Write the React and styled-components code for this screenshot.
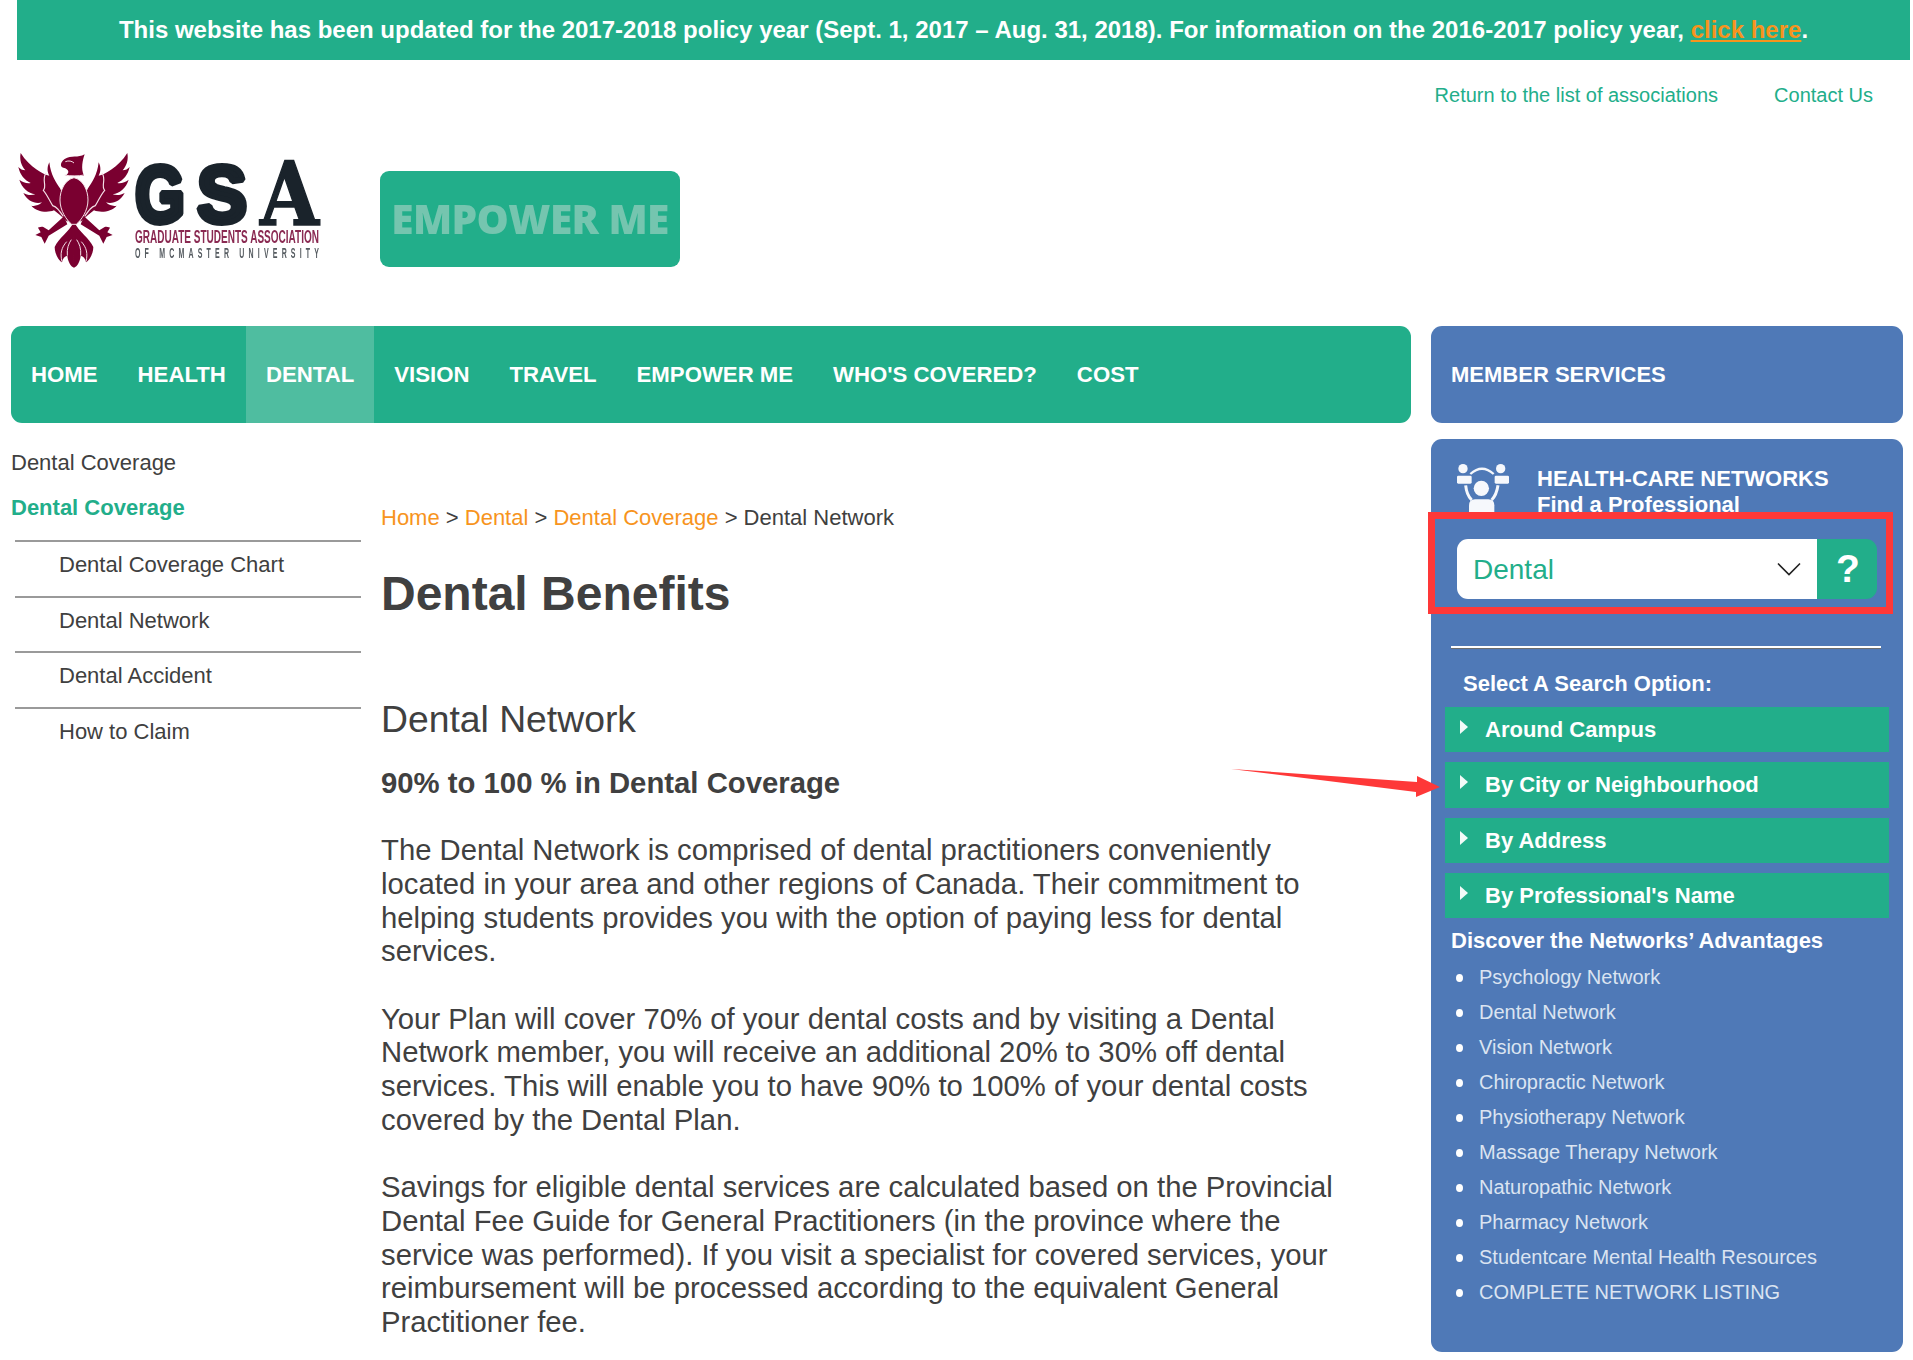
import React from "react";
import styled, { createGlobalStyle } from "styled-components";

const Global = createGlobalStyle`
  html, body { margin: 0; padding: 0; background: #fff; }
  body { font-family: "Liberation Sans", Arial, sans-serif; color: #404040; }
  * { box-sizing: border-box; }
  a { text-decoration: none; color: inherit; }
`;

const GREEN = "#22ae8a";
const BLUE = "#4f79b7";
const ORANGE = "#f7941d";

const Page = styled.div`
  position: relative;
  width: 1913px;
  height: 1360px;
  overflow: hidden;
`;
const Banner = styled.div`
  margin-left: 17px;
  width: 1893px;
  height: 60px;
  background: ${GREEN};
  color: #fff;
  font-weight: 700;
  font-size: 24px;
  line-height: 60px;
  text-align: center;
  white-space: nowrap;
  a { color: ${ORANGE}; text-decoration: underline; }
`;
const TopLinks = styled.div`
  display: flex;
  justify-content: flex-end;
  gap: 56px;
  height: 93px;
  padding: 24px 40px 0 0;
  font-size: 20px;
  line-height: 23px;
  color: ${GREEN};
`;
const Header = styled.div`
  display: flex;
  height: 173px;
  padding-left: 18px;
`;
const LogoBox = styled.div`
  width: 362px;
  flex: none;
  svg { display: block; overflow: visible; filter: blur(0.6px); }
`;
const EmpowerBtn = styled.div`
  margin-top: 18px;
  width: 300px;
  height: 96px;
  border-radius: 9px;
  background: ${GREEN};
  color: #75c5af;
  font-family: "Open Sans", "Liberation Sans", sans-serif;
  font-weight: 800;
  font-size: 40.6px;
  line-height: 96px;
  text-align: center;
  letter-spacing: -0.6px;
  white-space: nowrap;
  filter: blur(0.7px);
`;
const NavRow = styled.div`
  display: flex;
  gap: 20px;
  padding-left: 11px;
`;
const MainNav = styled.nav`
  display: flex;
  width: 1400px;
  height: 97px;
  border-radius: 11px;
  background: ${GREEN};
  overflow: hidden;
`;
const NavItem = styled.a`
  padding: 0 20px;
  font-size: 22.2px;
  font-weight: 700;
  line-height: 97px;
  color: #fff;
  background: ${p => (p.$active ? "#4fbda0" : "transparent")};
`;
const MemberBar = styled.div`
  width: 472px;
  height: 97px;
  padding-left: 20px;
  border-radius: 11px;
  background: ${BLUE};
  font-size: 22px;
  font-weight: 700;
  line-height: 97px;
  color: #fff;
`;
const Columns = styled.div`
  display: flex;
  padding-left: 11px;
`;
const SideNav = styled.aside`
  width: 350px;
  flex: none;
  padding-top: 27px;
  font-size: 22px;
`;
const SideTitle = styled.div`
  line-height: 26px;
`;
const SideCurrent = styled.div`
  margin-top: 19px;
  height: 45px;
  line-height: 26px;
  font-weight: 700;
  color: ${GREEN};
`;
const SideItem = styled.a`
  display: block;
  margin-left: 4px;
  height: 55.5px;
  padding-left: 44px;
  border-top: 2px solid #9a9a9a;
  line-height: 46px;
`;
const Content = styled.main`
  width: 1070px;
  flex: none;
  padding: 0 0 0 20px;
`;
const Crumbs = styled.div`
  margin-top: 81.5px;
  font-size: 22px;
  line-height: 26px;
  a { color: ${ORANGE}; }
`;
const H1 = styled.h1`
  margin: 35px 0 0;
  font-size: 48px;
  line-height: 56px;
  font-weight: 700;
`;
const H2 = styled.h2`
  margin: 75px 0 0;
  font-size: 37.3px;
  line-height: 44px;
  font-weight: 400;
`;
const Lead = styled.p`
  margin: 25px 0 3.4px;
  font-size: 29.3px;
  line-height: 34px;
  font-weight: 700;
`;
const Para = styled.p`
  margin: 33.7px 0 0;
  width: 965px;
  font-size: 29.28px;
  line-height: 33.7px;
`;
const Panel = styled.div`
  position: relative;
  width: 472px;
  height: 913px;
  margin: 16px 0 0;
  padding: 24px 14px 0;
  border-radius: 11px;
  background: ${BLUE};
  color: #fff;
`;
const PanelHead = styled.div`
  display: flex;
  height: 76px;
  padding-left: 12px;
  svg { flex: none; margin: 1px 28px 0 0; filter: blur(0.4px); }
`;
const PanelTitle = styled.div`
  font-size: 22px;
  font-weight: 700;
  line-height: 25.5px;
  padding-top: 3px;
`;
const SelectRow = styled.div`
  display: flex;
  width: 420px;
  height: 60px;
  margin-left: 12px;
`;
const SelectBox = styled.div`
  display: flex;
  align-items: center;
  justify-content: space-between;
  width: 360px;
  padding: 1px 16px 0;
  border-radius: 11px 0 0 11px;
  background: #fff;
  color: ${GREEN};
  font-size: 28px;
  svg { margin-top: -1px; }
`;
const HelpBtn = styled.div`
  width: 60px;
  padding-left: 2px;
  border-radius: 0 11px 11px 0;
  background: ${GREEN};
  color: #fff;
  font-size: 39px;
  font-weight: 700;
  line-height: 60px;
  text-align: center;
`;
const Rule = styled.div`
  margin: 47px 8px 0 6px;
  height: 3px;
  background: #fff;
  border-bottom: 1px solid #6d6d6d;
`;
const OptionsTitle = styled.div`
  margin: 22px 0 0 18px;
  font-size: 22px;
  font-weight: 700;
  line-height: 26px;
`;
const Options = styled.div`
  display: flex;
  flex-direction: column;
  margin-top: 10px;
  width: 444px;
`;
const Option = styled.div`
  display: flex;
  align-items: center;
  height: ${p => p.$h}px;
  margin-bottom: ${p => p.$gap}px;
  padding: 0 0 0 15px;
  background: ${GREEN};
  font-size: 22px;
  font-weight: 700;
  &::before {
    content: "";
    width: 0; height: 0;
    margin: -6px 17px 0 0;
    border-left: 8px solid #f2fbf8;
    border-top: 7.5px solid transparent;
    border-bottom: 7.5px solid transparent;
  }
`;
const Discover = styled.div`
  margin: 10px 0 0 6px;
  font-size: 22px;
  font-weight: 700;
  line-height: 26px;
`;
const NetList = styled.ul`
  list-style: none;
  margin: 6px 0 0;
  padding: 0 0 0 34px;
`;
const NetItem = styled.li`
  position: relative;
  height: 35px;
  font-size: 20px;
  line-height: 35px;
  color: #dbe4f1;
  &::before {
    content: "";
    position: absolute;
    left: -23px;
    top: 14px;
    width: 7px;
    height: 8px;
    border-radius: 50%;
    background: #fff;
  }
`;
const RedBox = styled.div`
  position: absolute;
  left: -3px;
  top: 73px;
  width: 465px;
  height: 102px;
  border: 7px solid #fe3838;
  pointer-events: none;
`;
const ArrowOverlay = styled.svg`
  position: absolute;
  left: 1225px;
  top: 760px;
`;

const MAROON = "#7a0030";

const EagleSide = () => (
  <g>
    <path fill={MAROON} d="M118 52 C110 68 112 82 118 92 C100 88 60 68 32 24 C28 44 34 62 46 76 C38 76 30 72 25 66 C30 90 44 106 62 114 C50 116 38 112 28 104 C36 130 54 144 76 148 C64 152 50 150 40 144 C52 168 76 178 96 172 C86 182 74 184 64 182 C80 200 110 205 132 196 L150 210 L172 230 L178 190 L150 130 C138 112 122 90 118 52 Z" />
    <path fill="none" stroke="#f4dfe6" strokeWidth="3.5" d="M108 84 C94 104 112 122 100 136 C112 150 120 170 128 182 C140 186 146 194 160 214" />
    <path fill={MAROON} d="M162 214 L116 256 L100 246 C92 244 84 248 84 248 L92 262 L76 270 L94 276 L104 296 L116 272 L172 238 Z" />
    <path fill={MAROON} d="M192 230 C176 262 146 278 134 306 C134 326 146 346 156 352 C158 340 164 334 172 332 C174 350 182 364 192 368 Z" />
    <path fill="none" stroke="#f4dfe6" strokeWidth="3" d="M172 332 C170 310 176 296 184 284 M156 350 C150 326 154 308 170 290" />
  </g>
);

const Eagle = () => (
  <g transform="scale(0.3333) translate(-24 -24)">
    <EagleSide />
    <g transform="translate(384 0) scale(-1 1)"><EagleSide /></g>
    <path fill={MAROON} stroke="#f4dfe6" strokeWidth="3" d="M192 98 C165 104 150 135 150 165 C150 198 170 225 185 238 L199 238 C214 225 234 198 234 165 C234 135 219 104 192 98 Z" />
    <path fill={MAROON} d="M166 92 C180 84 178 72 160 68 C150 66 150 52 164 42 C184 30 204 40 224 28 C218 46 212 70 222 92 Z" />
    <path fill="none" stroke="#f4dfe6" strokeWidth="3" d="M166 50 C176 46 186 48 192 54 M164 90 C180 94 206 94 222 90" />
  </g>
);

const Logo = () => (
  <svg width="304" height="118" viewBox="0 0 304 118">
    <Eagle />
    <g fontFamily="'Liberation Sans'" fontWeight="700" fill="#1a232b" stroke="#1a232b" strokeWidth="6" strokeLinejoin="bevel">
      <text x="117" y="69" fontSize="80" textLength="50" lengthAdjust="spacingAndGlyphs">G</text>
      <text x="179" y="69" fontSize="80" textLength="50" lengthAdjust="spacingAndGlyphs">S</text>
    </g>
    <text x="242" y="72" fontFamily="'DejaVu Serif'" fontWeight="700" fontSize="88" textLength="59" lengthAdjust="spacingAndGlyphs" fill="#1a232b" stroke="#1a232b" strokeWidth="1.5">A</text>
    <text x="117" y="90" fontFamily="'Liberation Sans'" fontWeight="700" fontSize="19" textLength="184" lengthAdjust="spacingAndGlyphs" fill="#8a2a52">GRADUATE STUDENTS ASSOCIATION</text>
    <g transform="scale(0.5 1)">
      <text x="234" y="105" fontFamily="'Liberation Sans'" fontWeight="700" fontSize="14" textLength="368" lengthAdjust="spacing" fill="#555b60">OF MCMASTER UNIVERSITY</text>
    </g>
  </svg>
);

const PeopleIcon = () => (
  <svg width="52" height="50" viewBox="52 42 156 150" fill="#f6f8fc">
    <circle cx="70" cy="56" r="14" />
    <circle cx="183" cy="56" r="14" />
    <rect x="52" y="77" width="44" height="24" rx="4" />
    <rect x="165" y="77" width="43" height="24" rx="4" />
    <path d="M92 72 Q127 40 162 72" fill="none" stroke="#f6f8fc" strokeWidth="7" />
    <circle cx="125" cy="115" r="23" />
    <path d="M78 106 C80 126 86 140 96 150 M175 106 C172 126 166 140 156 150" fill="none" stroke="#f6f8fc" strokeWidth="9" />
    <path d="M88 192 V166 Q88 148 106 148 H146 Q164 148 164 166 V192 Z" />
  </svg>
);

const links = [
  "Psychology Network", "Dental Network", "Vision Network", "Chiropractic Network",
  "Physiotherapy Network", "Massage Therapy Network", "Naturopathic Network",
  "Pharmacy Network", "Studentcare Mental Health Resources", "COMPLETE NETWORK LISTING",
];

const options = [
  ["Around Campus", 45, 10],
  ["By City or Neighbourhood", 46, 10],
  ["By Address", 45, 10],
  ["By Professional's Name", 45, 0],
];

export default function App() {
  return (
    <Page>
      <Global />
      <Banner>
        This website has been updated for the 2017-2018 policy year (Sept. 1, 2017 – Aug. 31, 2018). For information on the 2016-2017 policy year, <a href="#">click here</a>.
      </Banner>
      <TopLinks>
        <a href="#">Return to the list of associations</a>
        <a href="#">Contact Us</a>
      </TopLinks>
      <Header>
        <LogoBox><Logo /></LogoBox>
        <EmpowerBtn>EMPOWER ME</EmpowerBtn>
      </Header>
      <NavRow>
        <MainNav>
          <NavItem href="#">HOME</NavItem>
          <NavItem href="#">HEALTH</NavItem>
          <NavItem href="#" $active>DENTAL</NavItem>
          <NavItem href="#">VISION</NavItem>
          <NavItem href="#">TRAVEL</NavItem>
          <NavItem href="#">EMPOWER ME</NavItem>
          <NavItem href="#">WHO'S COVERED?</NavItem>
          <NavItem href="#">COST</NavItem>
        </MainNav>
        <MemberBar>MEMBER SERVICES</MemberBar>
      </NavRow>
      <Columns>
        <SideNav>
          <SideTitle>Dental Coverage</SideTitle>
          <SideCurrent>Dental Coverage</SideCurrent>
          <SideItem href="#">Dental Coverage Chart</SideItem>
          <SideItem href="#">Dental Network</SideItem>
          <SideItem href="#">Dental Accident</SideItem>
          <SideItem href="#">How to Claim</SideItem>
        </SideNav>
        <Content>
          <Crumbs>
            <a href="#">Home</a> &gt; <a href="#">Dental</a> &gt; <a href="#">Dental Coverage</a> &gt; Dental Network
          </Crumbs>
          <H1>Dental Benefits</H1>
          <H2>Dental Network</H2>
          <Lead>90% to 100 % in Dental Coverage</Lead>
          <Para>The Dental Network is comprised of dental practitioners conveniently located in your area and other regions of Canada. Their commitment to helping students provides you with the option of paying less for dental services.</Para>
          <Para>Your Plan will cover 70% of your dental costs and by visiting a Dental Network member, you will receive an additional 20% to 30% off dental services. This will enable you to have 90% to 100% of your dental costs covered by the Dental Plan.</Para>
          <Para>Savings for eligible dental services are calculated based on the Provincial Dental Fee Guide for General Practitioners (in the province where the service was performed). If you visit a specialist for covered services, your reimbursement will be processed according to the equivalent General Practitioner fee.</Para>
        </Content>
        <Panel>
          <PanelHead>
            <PeopleIcon />
            <PanelTitle>HEALTH-CARE NETWORKS<br />Find a Professional</PanelTitle>
          </PanelHead>
          <SelectRow>
            <SelectBox>
              Dental
              <svg width="24" height="14" viewBox="0 0 24 14" fill="none" stroke="#222" strokeWidth="1.6"><path d="M1 1.5 L12 12.5 L23 1.5" /></svg>
            </SelectBox>
            <HelpBtn>?</HelpBtn>
          </SelectRow>
          <Rule />
          <OptionsTitle>Select A Search Option:</OptionsTitle>
          <Options>
            {options.map(([t, h, g]) => <Option key={t} $h={h} $gap={g}>{t}</Option>)}
          </Options>
          <Discover>Discover the Networks’ Advantages</Discover>
          <NetList>
            {links.map(l => <NetItem key={l}>{l}</NetItem>)}
          </NetList>
          <RedBox />
        </Panel>
      </Columns>
      <ArrowOverlay width="220" height="45" viewBox="1225 760 220 45">
        <path fill="#fe3838" d="M1231 769 L1417 782 L1417 776 L1440 787 L1416 797 L1416 792 Z" />
      </ArrowOverlay>
    </Page>
  );
}
